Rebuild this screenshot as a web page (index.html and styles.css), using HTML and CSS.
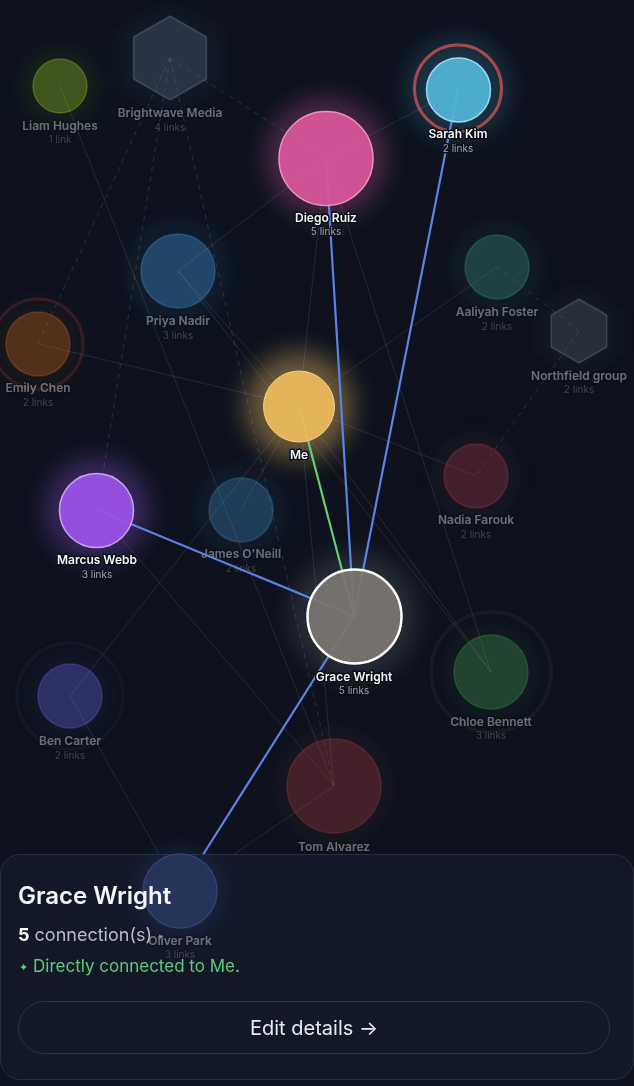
FILE: index.html
```html
<!DOCTYPE html>
<html lang="en">
<head>
<meta charset="utf-8">
<title>Network</title>
<link rel="stylesheet" href="styles.css">
</head>
<body>
<main class="stage">
  <svg class="graph" width="634" height="1086" viewBox="0 0 634 1086">
    <defs>
      <filter id="blurBig" x="-1" y="-1" width="3" height="3"><feGaussianBlur stdDeviation="12"/></filter>
      <filter id="blurSoft" x="-1" y="-1" width="3" height="3"><feGaussianBlur stdDeviation="9"/></filter>
    </defs>

    <!-- halos -->
    <g filter="url(#blurSoft)">
      <circle cx="60" cy="86" r="40" fill="#a3d725" opacity=".06"/>
      <polygon points="170,4 222,30 222,86 170,112 118,86 118,30" fill="#61768f" opacity=".07"/>
      <circle cx="178" cy="271" r="52" fill="#49a8f3" opacity=".07"/>
      <circle cx="497" cy="267" r="46" fill="#3f9b85" opacity=".07"/>
      <polygon points="579,287 618,309 618,353 579,375 540,353 540,309" fill="#5d6675" opacity=".08"/>
      <circle cx="38" cy="344" r="46" fill="#d86c1b" opacity=".05"/>
      <circle cx="476" cy="476" r="46" fill="#b03d4d" opacity=".06"/>
      <circle cx="241" cy="510" r="46" fill="#428dcb" opacity=".07"/>
      <circle cx="491" cy="672" r="50" fill="#49a553" opacity=".05"/>
      <circle cx="70" cy="696" r="44" fill="#716cf3" opacity=".05"/>
      <circle cx="334" cy="786" r="62" fill="#b43d43" opacity=".05"/>
    </g>
    <g filter="url(#blurBig)">
      <circle cx="326" cy="158" r="60" fill="#d8569b" opacity=".32"/>
      <circle cx="458" cy="89" r="50" fill="#52b5d6" opacity=".22"/>
      <circle cx="299" cy="406" r="54" fill="#edbb5c" opacity=".42"/>
      <circle cx="97" cy="510" r="52" fill="#9b54e7" opacity=".32"/>
      <circle cx="354" cy="616" r="62" fill="#d8d4d0" opacity=".14"/>
    </g>

    <!-- faint edges -->
    <g class="edge">
      <line x1="60" y1="86" x2="334" y2="786"/>
      <line x1="326" y1="158" x2="458" y2="89"/>
      <line x1="326" y1="158" x2="178" y2="271"/>
      <line x1="326" y1="158" x2="491" y2="672"/>
      <line x1="299" y1="406" x2="326" y2="158"/>
      <line x1="299" y1="406" x2="334" y2="786"/>
      <line x1="299" y1="406" x2="38" y2="344"/>
      <line x1="299" y1="406" x2="178" y2="271"/>
      <line x1="299" y1="406" x2="476" y2="476"/>
      <line x1="299" y1="406" x2="497" y2="267"/>
      <line x1="299" y1="406" x2="241" y2="510"/>
      <line x1="299" y1="406" x2="70" y2="696"/>
      <line x1="299" y1="406" x2="491" y2="672"/>
      <line x1="178" y1="271" x2="491" y2="672"/>
      <line x1="97" y1="510" x2="334" y2="786"/>
      <line x1="334" y1="786" x2="180" y2="891"/>
      <line x1="70" y1="696" x2="180" y2="891"/>
    </g>
    <g class="edge edge-dash">
      <line x1="170" y1="58" x2="326" y2="158"/>
      <line x1="170" y1="58" x2="38" y2="344"/>
      <line x1="170" y1="58" x2="97" y2="510"/>
      <line x1="170" y1="58" x2="334" y2="786"/>
      <line x1="579" y1="331" x2="497" y2="267"/>
      <line x1="579" y1="331" x2="476" y2="476"/>
    </g>

    <!-- dim rings -->
    <circle class="ring" cx="38" cy="344" r="45" stroke="#b43c4b" stroke-opacity=".22" stroke-width="3"/>
    <circle class="ring" cx="491" cy="672" r="60" stroke="#a08c50" stroke-opacity=".08" stroke-width="4"/>
    <circle class="ring" cx="70" cy="696" r="53" stroke="#967860" stroke-opacity=".07" stroke-width="4"/>

    <!-- dim nodes -->
    <g class="dim-node">
      <circle cx="60" cy="86" r="27" fill="#a3d725" stroke="#a3d725"/>
      <polygon points="170,16 206.4,37 206.4,79 170,100 133.6,79 133.6,37" fill="#61768f" stroke="#8a9ab0"/>
      <circle cx="178" cy="271" r="37" fill="#49a8f3" stroke="#49a8f3"/>
      <circle cx="497" cy="267" r="32" fill="#3f9b85" stroke="#3f9b85"/>
      <polygon points="579,299 606.7,315 606.7,347 579,363 551.3,347 551.3,315" fill="#5d6675" stroke="#8a94a6"/>
      <circle cx="38" cy="344" r="32" fill="#d86c1b" stroke="#d86c1b"/>
      <circle cx="476" cy="476" r="32" fill="#b03d4d" stroke="#b03d4d"/>
      <circle cx="241" cy="510" r="32" fill="#428dcb" stroke="#428dcb"/>
      <circle cx="491" cy="672" r="37" fill="#49a553" stroke="#49a553"/>
      <circle cx="70" cy="696" r="32" fill="#716cf3" stroke="#716cf3"/>
      <circle cx="334" cy="786" r="47" fill="#b43d43" stroke="#b43d43"/>
    </g>

    <!-- dim labels -->
    <g class="dim-label">
      <text class="name" x="60" y="130">Liam Hughes</text>
      <text class="count" x="60" y="143">1 link</text>
      <text class="name" x="170" y="117">Brightwave Media</text>
      <text class="count" x="170" y="131">4 links</text>
      <text class="name" x="178" y="325">Priya Nadir</text>
      <text class="count" x="178" y="339">3 links</text>
      <text class="name" x="497" y="316">Aaliyah Foster</text>
      <text class="count" x="497" y="330">2 links</text>
      <text class="name" x="579" y="380">Northfield group</text>
      <text class="count" x="579" y="393">2 links</text>
      <text class="name" x="38" y="392">Emily Chen</text>
      <text class="count" x="38" y="406">2 links</text>
      <text class="name" x="476" y="524">Nadia Farouk</text>
      <text class="count" x="476" y="538">2 links</text>
      <text class="name" x="241" y="558">James O'Neill</text>
      <text class="count" x="241" y="572">2 links</text>
      <text class="name" x="491" y="726">Chloe Bennett</text>
      <text class="count" x="491" y="739">3 links</text>
      <text class="name" x="70" y="745">Ben Carter</text>
      <text class="count" x="70" y="759">2 links</text>
      <text class="name" x="334" y="851">Tom Alvarez</text>
      <text class="count" x="334" y="864">5 links</text>
    </g>

    <!-- highlighted edges -->
    <g class="edge-hi">
      <line x1="354" y1="616" x2="326" y2="158"/>
      <line x1="354" y1="616" x2="458" y2="89"/>
      <line x1="354" y1="616" x2="97" y2="510"/>
      <line x1="354" y1="616" x2="180" y2="891"/>
      <line class="edge-me" x1="354" y1="616" x2="299" y2="406"/>
    </g>

    <!-- highlighted nodes -->
    <circle class="ring" cx="458" cy="88.5" r="43.5" stroke="#a6494f" stroke-width="3"/>
    <g class="hi-node">
      <circle cx="326" cy="158.5" r="47" fill="#d8569b" stroke="#ec92c0" stroke-width="1.5"/>
      <circle cx="458.5" cy="90" r="32" fill="#52b5d6" stroke="#9bdbee" stroke-width="1.5"/>
      <circle cx="299" cy="406.5" r="35.5" fill="#edbb5c" stroke="#f6d38e" stroke-width="1"/>
      <circle cx="96.5" cy="510.5" r="37" fill="#9b54e7" stroke="#c8a4f3" stroke-width="1.5"/>
      <circle class="selected" cx="354.5" cy="616.5" r="47" fill="#7b7672"/>
    </g>
    <g>
      <text class="name" x="326" y="222">Diego Ruiz</text>
      <text class="count" x="326" y="235">5 links</text>
      <text class="name" x="458" y="138">Sarah Kim</text>
      <text class="count" x="458" y="152">2 links</text>
      <text class="name" x="299" y="459">Me</text>
      <text class="name" x="97" y="564">Marcus Webb</text>
      <text class="count" x="97" y="578">3 links</text>
      <text class="name" x="354" y="681">Grace Wright</text>
      <text class="count" x="354" y="694">5 links</text>
    </g>
  </svg>

  <section class="sheet">
    <svg class="sheet-float" width="634" height="1086" viewBox="0 0 634 1086">
      <circle cx="180" cy="891" r="46" fill="#4a68c8" opacity=".12" filter="url(#blurSoft)"/>
      <circle cx="180" cy="891" r="37" fill="#26335a" stroke="#34426e" stroke-width="1.5"/>
      <g class="dim-label">
        <text class="name" x="180" y="945">Oliver Park</text>
        <text class="count" x="180" y="958">3 links</text>
      </g>
    </svg>
    <div class="sheet-body">
      <h2 class="sheet-title">Grace Wright</h2>
      <p class="sheet-conn"><strong>5</strong> connection(s) <span class="caret">▸</span></p>
      <p class="sheet-direct"><span class="spark">✦</span> Directly connected to Me.</p>
      <button class="sheet-btn" type="button">Edit details →</button>
    </div>
  </section>
</main>
</body>
</html>
```

FILE: styles.css
```css
html, body {
  margin: 0;
  padding: 0;
  background: #0d121e;
}

.stage {
  position: relative;
  width: 634px;
  height: 1086px;
  overflow: hidden;
  background: #0d121e;
  font-family: Inter, "Noto Sans", "DejaVu Sans", sans-serif;
}

.graph {
  position: absolute;
  top: 0;
  left: 0;
  display: block;
}

.edge line {
  stroke: rgba(203, 213, 225, 0.13);
  stroke-width: 1;
}

.edge-dash line {
  stroke: rgba(203, 213, 225, 0.17);
  stroke-dasharray: 5 5;
}

.edge-hi line {
  stroke: #5b84e3;
  stroke-width: 2.2;
  stroke-linecap: round;
}

.edge-hi line.edge-me {
  stroke: #5fcf72;
}

.ring {
  fill: none;
}

.dim-node circle,
.dim-node polygon {
  fill-opacity: 0.3;
  stroke-opacity: 0.3;
  stroke-width: 1.5;
}

.hi-node circle {
  fill-opacity: 0.93;
}

.hi-node .selected {
  stroke: #ffffff;
  stroke-width: 2.5;
}

.name {
  font-family: Inter, "Noto Sans", sans-serif;
  font-size: 12px;
  font-weight: 600;
  fill: #f5f6f8;
  text-anchor: middle;
  stroke: #0a0e17;
  stroke-width: 3px;
  stroke-linejoin: round;
  paint-order: stroke;
}

.count {
  font-family: Inter, "Noto Sans", sans-serif;
  font-size: 10px;
  font-weight: 400;
  fill: #a2a7b2;
  text-anchor: middle;
  stroke: #0a0e17;
  stroke-width: 2.5px;
  stroke-linejoin: round;
  paint-order: stroke;
}

.dim-label {
  opacity: 0.4;
}

.dim-label .count {
  fill: #8d939f;
}

/* bottom sheet */
.sheet {
  position: absolute;
  left: 0;
  right: 0;
  bottom: 6px;
  height: 226px;
  box-sizing: border-box;
  border: 1px solid #262f45;
  border-radius: 20px;
  background: rgba(19, 25, 40, 0.97);
}

.sheet-float {
  position: absolute;
  left: -1px;
  top: -855px;
  overflow: visible;
  pointer-events: none;
}

.sheet-body {
  position: relative;
  display: flex;
  flex-direction: column;
  align-items: stretch;
  padding: 26px 23px 0 17px;
}

.sheet-title {
  margin: 0;
  font-size: 24px;
  line-height: 29px;
  font-weight: 600;
  color: #f4f5f7;
}

.sheet-conn {
  margin: 13px 0 0 0;
  font-size: 18px;
  line-height: 24px;
  color: #b9bdc7;
}

.sheet-conn strong {
  color: #ffffff;
  font-weight: 700;
}

.caret {
  font-family: "DejaVu Sans", sans-serif;
  font-size: 9px;
  color: #8c92a0;
  vertical-align: 2px;
  margin-left: 2px;
}

.sheet-direct {
  margin: 7px 0 0 0;
  font-size: 17px;
  line-height: 22px;
  color: #5fcb7a;
}

.spark {
  font-family: "DejaVu Sans", sans-serif;
  font-size: 11px;
  vertical-align: 1px;
  margin-left: 1px;
}

.sheet-btn {
  margin-top: 22px;
  height: 53px;
  border-radius: 27px;
  border: 1.5px solid #2a3349;
  background: transparent;
  color: #e7e9ee;
  font-family: Inter, "Noto Sans", "DejaVu Sans", sans-serif;
  font-size: 20px;
  font-weight: 400;
  cursor: pointer;
}
```
